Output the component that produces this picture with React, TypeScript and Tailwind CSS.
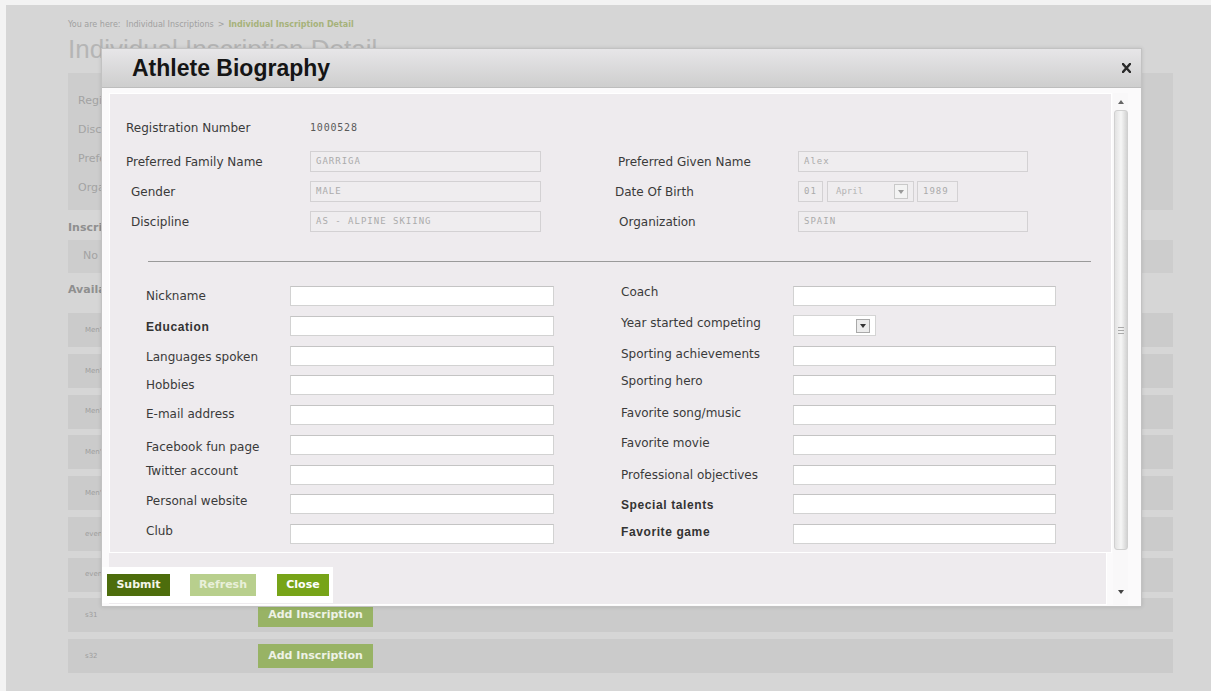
import React from 'react';

type Field = { label: string; bold?: boolean; shift: string; kind?: 'text' | 'year' };

const leftFields: Field[] = [
  { label: 'Nickname', shift: '' },
  { label: 'Education', bold: true, shift: 'mt-[2px]' },
  { label: 'Languages spoken', shift: 'mt-[3px]' },
  { label: 'Hobbies', shift: '' },
  { label: 'E-mail address', shift: 'mb-[2px]' },
  { label: 'Facebook fun page', shift: 'mt-[4px]' },
  { label: 'Twitter account', shift: 'mb-[7px]' },
  { label: 'Personal website', shift: 'mb-[6px]' },
  { label: 'Club', shift: 'mb-[6px]' },
];

const rightFields: Field[] = [
  { label: 'Coach', shift: 'mb-[8px]' },
  { label: 'Year started competing', shift: 'mb-[6px]', kind: 'year' },
  { label: 'Sporting achievements', shift: 'mb-[3px]' },
  { label: 'Sporting hero', shift: 'mb-[8px]' },
  { label: 'Favorite song/music', shift: 'mb-[4px]' },
  { label: 'Favorite movie', shift: 'mb-[4px]' },
  { label: 'Professional objectives', shift: '' },
  { label: 'Special talents', bold: true, shift: 'mt-[2px]' },
  { label: 'Favorite game', bold: true, shift: 'mb-[4px]' },
];

const eventRows = [
  'Men\'s Downhill',
  'Men\'s Super-G',
  'Men\'s Giant Slalom',
  'Men\'s Slalom',
  'Men\'s Super Combined',
  'event 1',
  'event 2',
  's31',
  's32',
];

const DropArrow = () => (
  <span className="flex h-[14px] w-[14px] items-center justify-center border border-[#a9a9a9] bg-[#ececec]">
    <svg width="6" height="4" viewBox="0 0 6 4">
      <path d="M0 0h6L3 4z" fill="#333" />
    </svg>
  </span>
);

const Locked = ({ value, className }: { value: string; className: string }) => (
  <div
    className={`flex h-[21px] items-center border border-[#d3d1d3] bg-[#efedef] pl-[5px] font-['DejaVu_Sans_Mono',monospace] text-[9px] tracking-[1px] text-[#ababab] ${className}`}
  >
    {value}
  </div>
);

const FieldLabel = ({ field }: { field: Field }) => (
  <span
    className={
      field.bold
        ? `font-['Liberation_Sans',sans-serif] text-[12px] font-bold tracking-[0.6px] text-[#333] ${field.shift}`
        : `text-[12px] text-[#3a3a3a] ${field.shift}`
    }
  >
    {field.label}
  </span>
);

const TextBox = () => <div className="h-[20px] w-[264px] border border-[#d2d2d2] border-t-[#c4c4c4] bg-white" />;

// page behind the dialog
const BackgroundPage = () => (
  <div className="h-full bg-[#d6d6d6] pl-[62px] pr-[38px] pt-[15px] text-[#a3a3a3]">
    <div className="text-[8px] leading-[10px] text-[#a0a0a0]">
      You are here: <span className="ml-[3px]">Individual Inscriptions</span>
      <span className="mx-[4px]">&gt;</span>
      <span className="font-bold text-[#a6b27a]">Individual Inscription Detail</span>
    </div>
    <h1 className="mt-[4px] font-['Liberation_Sans',sans-serif] text-[26px] leading-[30px] text-[#b5b5b5]">
      Individual Inscription Detail
    </h1>

    <div className="mt-[9px] flex h-[137px] flex-col bg-[#cdcdcd] pl-[10px] pt-[20px] text-[11px]">
      <span className="h-[29px]">Registration Number</span>
      <span className="h-[29px]">Discipline</span>
      <span className="h-[29px]">Preferred Name</span>
      <span className="h-[29px]">Organization</span>
    </div>

    <div className="mt-[10px] text-[11px] font-bold leading-[16px] text-[#8f8f8f]">Inscriptions</div>
    <div className="mt-[4px] flex h-[33px] items-center bg-[#cdcdcd] pl-[15px] text-[11px]">No inscriptions</div>

    <div className="mt-[9px] text-[11px] font-bold leading-[16px] text-[#8f8f8f]">Available Events</div>
    <div className="mt-[15px] flex flex-col gap-[6.75px]">
      {eventRows.map((name) => (
        <div key={name} className="flex h-[34px] items-center bg-[#cbcbcb] pl-[17px] text-[7px] text-[#9d9d9d]">
          <span className="w-[173px]">{name}</span>
          <span className="flex h-[24px] w-[115px] items-center justify-center bg-[#98b365] text-[11px] font-bold text-[#eef2e6]">
            Add Inscription
          </span>
        </div>
      ))}
    </div>
  </div>
);

const Scrollbar = () => (
  <div className="ml-[1px] flex h-[512px] w-[15px] flex-col items-center bg-[#f9f8f9] pb-[11px] pt-[7px]">
    <svg width="6" height="4" viewBox="0 0 6 4">
      <path d="M3 0l3 4H0z" fill="#666" />
    </svg>
    <div className="mt-[6px] flex h-[440px] w-[14px] flex-col items-center justify-center gap-[2px] rounded-[3px] border border-[#d0d0d0] bg-gradient-to-r from-[#e2e2e2] via-[#f6f6f6] to-[#d3d3d3]">
      <span className="h-px w-[6px] bg-[#aaa]" />
      <span className="h-px w-[6px] bg-[#aaa]" />
      <span className="h-px w-[6px] bg-[#aaa]" />
    </div>
    <div className="flex-1" />
    <svg width="6" height="4" viewBox="0 0 6 4">
      <path d="M0 0h6L3 4z" fill="#444" />
    </svg>
  </div>
);

const BiographyModal = () => (
  <div className="absolute left-[101px] top-[48px] flex h-[559px] w-[1041px] flex-col border border-[#c2c2c2] bg-[#fbfafb] shadow-[0_0_4px_rgba(0,0,0,0.12)]">
    <div className="flex h-[39px] items-center justify-between border-b border-[#bdbdbd] bg-gradient-to-b from-[#e7e6e8] to-[#cecece] pl-[30px] pr-[10px]">
      <h2 className="font-['Liberation_Sans',sans-serif] text-[23px] font-bold text-[#151515]">Athlete Biography</h2>
      <svg width="9" height="10" viewBox="0 0 9 10">
        <path d="M1 1l7 8M8 1l-7 8" stroke="#2a2a2a" strokeWidth="2.4" strokeLinecap="square" />
      </svg>
    </div>

    <div className="flex pl-[7px] pt-[5px]">
      <div className="flex w-[1003px] flex-col">
        <div className="h-[460px] border border-white bg-[#eeebee]">
          {/* locked registration data */}
          <div className="flex flex-col pl-[16px] pt-[23px]">
            <div className="flex h-[21px] items-center">
              <span className="w-[184px] text-[12px] text-[#3a3a3a]">Registration Number</span>
              <span className="font-['DejaVu_Sans_Mono',monospace] text-[10px] tracking-[0.8px] text-[#5a5a5a]">1000528</span>
            </div>
            <div className="mt-[13px] flex h-[21px] items-center">
              <span className="w-[184px] text-[12px] text-[#3a3a3a]">Preferred Family Name</span>
              <Locked value="GARRIGA" className="w-[231px]" />
              <span className="ml-[77px] w-[180px] text-[12px] text-[#3a3a3a]">Preferred Given Name</span>
              <Locked value="Alex" className="w-[230px]" />
            </div>
            <div className="mt-[9px] flex h-[21px] items-center">
              <span className="w-[184px] pl-[5px] text-[12px] text-[#3a3a3a]">Gender</span>
              <Locked value="MALE" className="w-[231px]" />
              <span className="ml-[74px] w-[183px] text-[12px] text-[#3a3a3a]">Date Of Birth</span>
              <Locked value="01" className="w-[25px]" />
              <div className="ml-[4px] flex h-[21px] w-[87px] items-center justify-between border border-[#d3d1d3] bg-[#efedef] pl-[8px] pr-[5px] font-['DejaVu_Sans_Mono',monospace] text-[9px] text-[#b3b3b3]">
                April
                <span className="flex h-[15px] w-[14px] items-center justify-center border border-[#c9c9c9] bg-[#f3f3f3]">
                  <svg width="6" height="4" viewBox="0 0 6 4">
                    <path d="M0 0h6L3 4z" fill="#9a9a9a" />
                  </svg>
                </span>
              </div>
              <Locked value="1989" className="ml-[3px] w-[41px]" />
            </div>
            <div className="mt-[9px] flex h-[21px] items-center">
              <span className="w-[184px] pl-[5px] text-[12px] text-[#3a3a3a]">Discipline</span>
              <Locked value="AS - ALPINE SKIING" className="w-[231px]" />
              <span className="ml-[78px] w-[179px] text-[12px] text-[#3a3a3a]">Organization</span>
              <Locked value="SPAIN" className="w-[230px]" />
            </div>
          </div>

          <div className="ml-[38px] mt-[29px] h-px w-[943px] bg-[#9a9a9a]" />

          {/* editable biography fields */}
          <div className="mt-[24px] flex flex-col gap-[9.75px] pl-[36px]">
            {leftFields.map((left, i) => {
              const right = rightFields[i];
              return (
                <div key={left.label} className="flex h-[20px] items-center">
                  <div className="flex h-[20px] w-[144px] items-center">
                    <FieldLabel field={left} />
                  </div>
                  <TextBox />
                  <div className="ml-[67px] flex h-[20px] w-[172px] items-center">
                    <FieldLabel field={right} />
                  </div>
                  {right.kind === 'year' ? (
                    <div className="flex h-[21px] w-[83px] items-center justify-end border border-[#d4d4d4] bg-white pr-[5px]">
                      <DropArrow />
                    </div>
                  ) : (
                    <div className="h-[20px] w-[263px] border border-[#d2d2d2] border-t-[#c4c4c4] bg-white" />
                  )}
                </div>
              );
            })}
          </div>
        </div>

        <div className="flex h-[52px] w-[998px] items-end border-b border-r border-white bg-[#eeebee] pb-[1px]">
          <div className="-ml-[7px] flex h-[36px] items-center bg-white pl-[5px] pr-[4px]">
            <button className="h-[22px] w-[63px] bg-[#4d6d0c] text-[11px] font-bold text-[#f5f5e8]">Submit</button>
            <button className="ml-[20px] h-[22px] w-[66px] bg-[#b8cf8d] text-[11px] font-bold text-[#e9f0da]">Refresh</button>
            <button className="ml-[21px] h-[22px] w-[52px] bg-[#77a418] text-[11px] font-bold text-white">Close</button>
          </div>
        </div>
      </div>

      <Scrollbar />
    </div>
  </div>
);

export default function App() {
  return (
    <div className="relative h-[691px] w-[1211px] overflow-hidden bg-[#f3f3f3] pl-[6px] pt-[5px] font-['DejaVu_Sans',sans-serif]">
      <BackgroundPage />
      <BiographyModal />
    </div>
  );
}
